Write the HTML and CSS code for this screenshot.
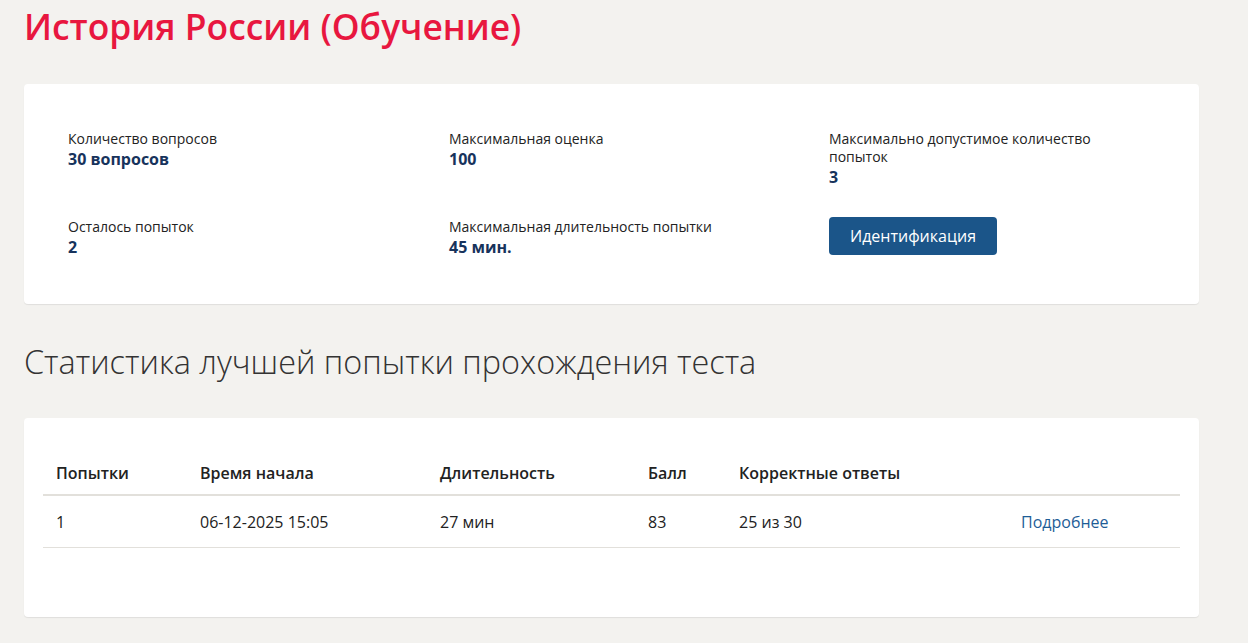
FILE: index.html
```html
<!DOCTYPE html>
<html lang="ru">
<head>
    <meta charset="UTF-8">
    <meta name="viewport" content="width=device-width, initial-scale=1.0">
    <title>История России (Обучение)</title>
    <link rel="stylesheet" href="styles.css">
</head>
<body>
    <div class="page">
        <h1 class="test-title">История России (Обучение)</h1>

        <div class="card info-card">
            <div class="info-grid">
                <div class="info-item">
                    <div class="info-label">Количество вопросов</div>
                    <div class="info-value">30 вопросов</div>
                </div>
                <div class="info-item">
                    <div class="info-label">Максимальная оценка</div>
                    <div class="info-value">100</div>
                </div>
                <div class="info-item">
                    <div class="info-label">Максимально допустимое количество попыток</div>
                    <div class="info-value">3</div>
                </div>
                <div class="info-item">
                    <div class="info-label">Осталось попыток</div>
                    <div class="info-value">2</div>
                </div>
                <div class="info-item">
                    <div class="info-label">Максимальная длительность попытки</div>
                    <div class="info-value">45 мин.</div>
                </div>
                <div class="info-item">
                    <button class="btn-primary" type="button">Идентификация</button>
                </div>
            </div>
        </div>

        <h2 class="section-title">Статистика лучшей попытки прохождения теста</h2>

        <div class="card stats-card">
            <table class="stats-table">
                <thead>
                    <tr>
                        <th class="col-num">Попытки</th>
                        <th class="col-start">Время начала</th>
                        <th class="col-dur">Длительность</th>
                        <th class="col-score">Балл</th>
                        <th class="col-correct">Корректные ответы</th>
                        <th class="col-link"></th>
                    </tr>
                </thead>
                <tbody>
                    <tr>
                        <td>1</td>
                        <td>06-12-2025 15:05</td>
                        <td>27 мин</td>
                        <td>83</td>
                        <td>25 из 30</td>
                        <td><a href="#" class="more-link">Подробнее</a></td>
                    </tr>
                </tbody>
            </table>
        </div>
    </div>
</body>
</html>
```

FILE: styles.css
```css
body {
    margin: 0;
    background-color: #f3f2ef;
    font-family: "Open Sans", "Noto Sans", sans-serif;
    color: #222;
}

.page {
    width: 1175px;
    padding: 0 24px 26px;
}

.test-title {
    margin: 0;
    padding-top: 2px;
    font-size: 35.4px;
    font-weight: 600;
    line-height: 48px;
    color: #e8173f;
}

.card {
    background-color: #fff;
    border-radius: 4px;
    box-shadow: 0 1px 1px rgba(0, 0, 0, 0.08);
}

.info-card {
    margin-top: 34px;
    padding: 46px 0 46px 44px;
}

.info-grid {
    display: grid;
    grid-template-columns: 381px 380px 300px;
    row-gap: 30px;
}

.info-label {
    font-size: 14px;
    line-height: 18px;
    color: #222;
}

.info-value {
    font-size: 16px;
    font-weight: 700;
    line-height: 22px;
    color: #17335c;
}

.btn-primary {
    height: 38px;
    margin-top: -1px;
    padding: 0 21px;
    border: none;
    border-radius: 4px;
    background-color: #1b5589;
    color: #fff;
    font-family: inherit;
    font-size: 16px;
    cursor: pointer;
}

.section-title {
    margin: 35px 0 0;
    font-size: 32.4px;
    font-weight: 300;
    line-height: 44px;
    color: #333;
}

.stats-card {
    margin-top: 35px;
    padding: 34px 19px 69px;
}

.stats-table {
    width: 100%;
    border-collapse: collapse;
    font-size: 16px;
}

.stats-table th {
    text-align: left;
    font-weight: 600;
    padding: 10px 13px;
    line-height: 22px;
    border-bottom: 2px solid #e2e0db;
}

.stats-table td {
    padding: 15px 13px 14px;
    line-height: 22px;
    border-bottom: 1px solid #e2e0db;
}

.col-num { width: 118px; }
.col-start { width: 214px; }
.col-dur { width: 182px; }
.col-score { width: 65px; }
.col-correct { width: 256px; }

.more-link {
    color: #1e5d97;
    text-decoration: none;
}
```
